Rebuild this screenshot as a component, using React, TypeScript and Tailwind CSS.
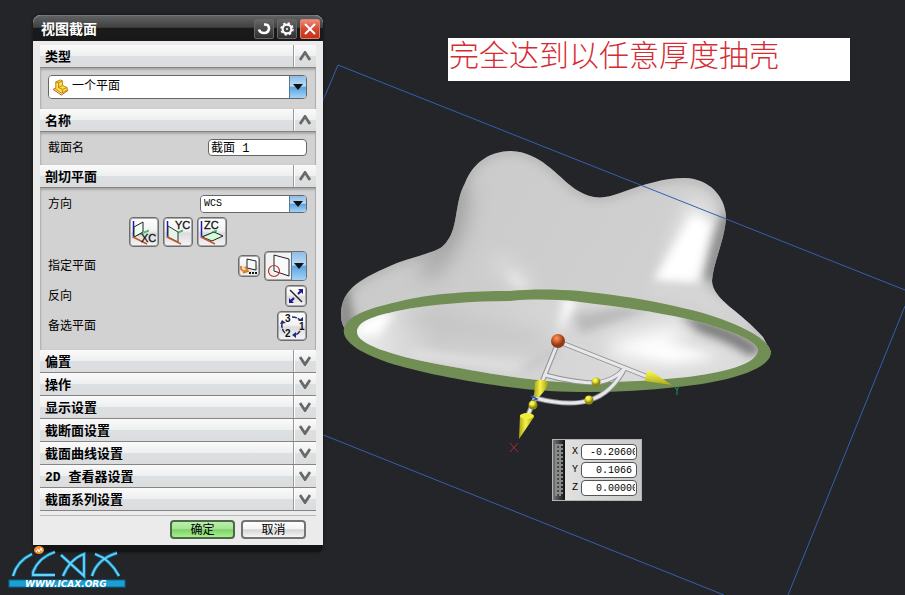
import type { ReactNode } from "react";

const collapsedSections = ["偏置", "操作", "显示设置", "截断面设置", "截面曲线设置", "2D 查看器设置", "截面系列设置"];

const coordinates = [
  { axis: "X", value: "-0.20600" },
  { axis: "Y", value: " 0.1066" },
  { axis: "Z", value: " 0.00000" },
];

const outline =
  "M341 315C341 288 362 278 397 263C420 255 436 252 443 246C460 230 453 205 465 183C474 160 493 151 511 151C540 152 556 175 575 189C592 200 604 199 620 193C645 184 664 178 685 178C710 179 724 196 726 215C726 238 713 262 712 281C713 300 740 311 763 337L771 352L740 360L560 370L380 345L347 332Q341 325 341 315Z";

const rimOuter =
  "M344 329C347 316 366 309 397 302C430 293 475 291 510 291C530 289 555 289 580 291C640 297 680 307 703 313C742 325 771 340 771 353C769 373 712 384 677 387C635 392 590 393 550 391C500 388 435 376 400 366C367 357 341 343 344 329Z";

const rimInner =
  "M357 332C357 321 375 316 397 311C430 304 475 301 510 301C530 299 555 299 580 302C622 307 655 312 683 318C720 327 757 339 758 350C757 367 710 375 677 378C640 382 595 383 560 382C510 378 470 370 437 364C390 355 357 344 357 332Z";

function PanelHeader({ title, open }: { title: string; open?: boolean }) {
  return (
    <button
      type="button"
      aria-expanded={!!open}
      className="flex h-[23px] w-full items-stretch border-b border-[#858585] bg-[linear-gradient(#fafafa,#eeefef_48%,#dce0e3_52%,#dcdcdc)] text-left text-[13px] font-bold text-black"
    >
      <span className="flex flex-1 items-center pt-[2px] pl-[5px] leading-none">{title}</span>
      <span className="flex w-[23px] items-center justify-center border-l border-[#999] shadow-[inset_1px_0_0_#fff]">
        <svg viewBox="0 0 12 10" className="h-[10px] w-3" fill="none" stroke="#686868" strokeWidth="2.8">
          <path d={open ? "M1 9L6 1.5L11 9" : "M1 1L6 8.5L11 1"} />
        </svg>
      </span>
    </button>
  );
}

function PanelBody({ children }: { children: ReactNode }) {
  return (
    <div className="flex flex-col gap-1 bg-[#d2d2d2] pt-[7px] pr-[9px] pb-[9px] pl-2 text-xs shadow-[inset_1px_2px_2px_#aaa,inset_-1px_0_1px_#aaa]">
      {children}
    </div>
  );
}

function Row({ children }: { children: ReactNode }) {
  return <div className="flex items-center justify-between">{children}</div>;
}

function ToolButton({ label, className, children }: { label: string; className: string; children: ReactNode }) {
  return (
    <button
      type="button"
      aria-label={label}
      className={`flex items-center justify-center rounded-[4px] border border-[#6d6d6d] bg-[linear-gradient(#fff,#f2f2f2_45%,#dcdce0_55%,#f5f5f5)] shadow-[inset_0_0_0_1px_#aaa] ${className}`}
    >
      {children}
    </button>
  );
}

function DropArrow({ className }: { className: string }) {
  return (
    <span
      className={`pointer-events-none flex items-center justify-center border-l border-[#59788f] bg-[linear-gradient(#8fbbe6,#b8ddf8_45%,#5fa5df_52%,#a3d3f8)] ${className}`}
    >
      <svg viewBox="0 0 10 6" className="h-[6px] w-[10px]">
        <path d="M0 0H10L5 6Z" fill="#111" />
      </svg>
    </span>
  );
}

function AxisIcon({ name }: { name: "XC" | "YC" | "ZC" }) {
  return (
    <svg viewBox="0 0 26 26" className="size-[26px]" fill="none" strokeWidth="1">
      <path d="M2.500 2V19" stroke="#1919b8" strokeWidth="1.500" />
      <path d="M2 18L18 12" stroke="#2fb65f" />
      {name === "XC" && <path d="M3 8L12 3V13L3 18Z" fill="#effff2" stroke="#222" />}
      {name === "YC" && <path d="M3 7L13 13V23L3 18Z" fill="#e7f5e9" stroke="#333" />}
      {name === "ZC" && <path d="M3 18L15 13L24 17L13 22Z" fill="#cffbd8" stroke="#222" />}
      <path d="M2 18L16 25" stroke="#c55432" strokeWidth="1.500" />
      <path d="M13 13L18 11" stroke="#2fb65f" />
      <text
        x={name === "XC" ? 10 : name === "YC" ? 10 : 5}
        y={name === "XC" ? 23 : 10}
        fill="#111"
        className="font-['Liberation_Sans',sans-serif] text-[11px]"
        stroke="#111"
        strokeWidth="0.3"
      >
        {name}
      </text>
    </svg>
  );
}

function Dialog() {
  return (
    <section className="absolute top-[15px] left-[33px] w-[290px] rounded-t-lg rounded-b-md border-b-[7px] border-[#131416] bg-[#ebebeb] shadow-[0_0_3px_#111]">
      <header className="flex h-[26px] items-center gap-[2px] rounded-t-lg border-t border-[#777] bg-[linear-gradient(#606162,#414142_45%,#1a1a1a_50%,#181818)] pr-[3px] pl-2 text-white">
        <h1 className="flex-1 pt-[2px] text-sm leading-none font-bold">视图截面</h1>
        <button type="button" aria-label="重置" className="flex size-5 items-center justify-center rounded-[2px] border border-[#666] bg-[linear-gradient(#656565,#303030)]">
          <svg viewBox="0 0 16 16" className="size-4" fill="none" stroke="#fff" strokeWidth="2.6">
            <path d="M8 3.5Q13 3 13 7.500Q12.500 12 8 12Q4 12 3 8.500" />
          </svg>
        </button>
        <button type="button" aria-label="设置" className="ml-[1px] flex size-5 items-center justify-center rounded-[2px] border border-[#666] bg-[linear-gradient(#656565,#303030)]">
          <svg viewBox="0 0 16 16" className="size-4" fill="none" stroke="#fff">
            <circle cx="8" cy="8" r="4.400" strokeWidth="2.200" />
            <circle cx="8" cy="8" r="6" strokeWidth="1.400" strokeDasharray="2.300 2.410" />
            <circle cx="8" cy="8" r="1" fill="#fff" stroke="none" />
          </svg>
        </button>
        <button type="button" aria-label="关闭" className="ml-[1px] flex size-5 items-center justify-center rounded-[2px] border border-[#d98270] bg-[linear-gradient(#ef8c77,#d64832_50%,#c83019)]">
          <svg viewBox="0 0 16 16" className="size-4" stroke="#fff" strokeWidth="2">
            <path d="M3 3L13 13M13 3L3 13" />
          </svg>
        </button>
      </header>

      <div className="px-[7px] pt-1 pb-[6px]">
        <PanelHeader title="类型" open />
        <PanelBody>
          <div className="mb-[1px] grid h-6 overflow-hidden rounded-[4px] border border-[#666] bg-white">
            <select aria-label="类型" className="col-start-1 row-start-1 h-[22px] w-full appearance-none bg-white pl-[23px] text-xs leading-[20px] text-black">
              <option>一个平面</option>
            </select>
            <svg viewBox="0 0 18 18" className="pointer-events-none col-start-1 row-start-1 ml-[3px] size-[17px] self-center" stroke="#b98210">
              <path d="M1 11L9 8L17 12L10 17Z" fill="#fff0a0" stroke="#c65222" />
              <path d="M4 3L9 1L11 2V7L16 9V12L10 15L4 11Z" fill="#ffe04a" />
              <path d="M4 3L7 4V9L11 11V15M7 4L11 2M7 9L11 7M11 11L16 9" fill="none" />
            </svg>
            <DropArrow className="col-start-1 row-start-1 w-[17px] justify-self-end" />
          </div>
        </PanelBody>

        <PanelHeader title="名称" open />
        <PanelBody>
          <Row>
            <label htmlFor="section-name" className="pt-[2px] leading-none">截面名</label>
            <input id="section-name" defaultValue="截面 1" className="h-[17px] w-[99px] rounded-[4px] border border-[#666] bg-white px-[2px] pb-[2px] text-xs leading-none" />
          </Row>
        </PanelBody>

        <PanelHeader title="剖切平面" open />
        <PanelBody>
          <Row>
            <label htmlFor="direction" className="pt-[2px] leading-none">方向</label>
            <div className="grid h-[18px] w-[107px] overflow-hidden rounded-[4px] border border-[#666] bg-white">
              <select id="direction" className="col-start-1 row-start-1 w-full appearance-none bg-white pl-[3px] text-[10px] leading-none text-black">
                <option>WCS</option>
              </select>
              <DropArrow className="col-start-1 row-start-1 w-[17px] justify-self-end" />
            </div>
          </Row>
          <div className="flex justify-end gap-1 pr-20">
            <ToolButton label="XC 平面" className="size-[30px]"><AxisIcon name="XC" /></ToolButton>
            <ToolButton label="YC 平面" className="size-[30px]"><AxisIcon name="YC" /></ToolButton>
            <ToolButton label="ZC 平面" className="size-[30px]"><AxisIcon name="ZC" /></ToolButton>
          </div>
          <Row>
            <span className="pt-[2px] leading-none">指定平面</span>
            <div className="flex items-center gap-1">
              <ToolButton label="平面对话框" className="size-[22px]">
                <svg viewBox="0 0 20 20" className="size-5" fill="none">
                  <path d="M8 3L17 5V14L8 12Z" fill="#f8f8f8" stroke="#222" />
                  <path d="M2 10V13Q4 16 8 15M6 11L9 15L4 17" stroke="#e37c16" strokeWidth="1.800" />
                  <path d="M10 17H18" stroke="#111" strokeWidth="2" strokeDasharray="2 1" />
                </svg>
              </ToolButton>
              <div className="flex h-[30px] w-[43px] overflow-hidden rounded-[4px] border border-[#6d6d6d] bg-[#f3f3f3] shadow-[inset_0_0_0_1px_#aaa]">
                <button type="button" aria-label="指定平面" className="flex-1">
                  <svg viewBox="0 0 26 28" className="h-7 w-[26px]" fill="none">
                    <path d="M9 3L24 7V24L9 19Z" fill="#fafafa" stroke="#222" />
                    <circle cx="9" cy="19" r="5.500" stroke="#bd3030" strokeWidth="1.200" />
                  </svg>
                </button>
                <button type="button" aria-label="平面类型" className="flex">
                  <DropArrow className="h-full w-[15px]" />
                </button>
              </div>
            </div>
          </Row>
          <Row>
            <span className="pt-[2px] leading-none">反向</span>
            <ToolButton label="反向" className="size-[22px]">
              <svg viewBox="0 0 20 20" className="size-5">
                <path d="M4 4L16 16" stroke="#222" strokeWidth="1.400" />
                <path d="M5 15L8 12M12 8L15 5" stroke="#1b1b8e" strokeWidth="2.200" />
                <path d="M12 3H17V8ZM3 12V17H8Z" fill="#1b1b8e" />
              </svg>
            </ToolButton>
          </Row>
          <Row>
            <span className="pt-[2px] leading-none">备选平面</span>
            <ToolButton label="备选平面" className="size-[30px]">
              <svg viewBox="0 0 28 28" className="size-7" fill="none" stroke="#252b70" strokeWidth="1.500">
                <path d="M14 5Q19 5 22 8M22 19Q20 22 17 23M7 21Q3 17 4 11" strokeDasharray="5 1" />
                <path d="M20 9H25V5ZM18 20L14 23L18 26ZM2 12L4 8L8 11Z" fill="#252b70" stroke="none" />
                <g fill="#111" stroke="none" className="font-['Liberation_Sans',sans-serif] text-[10px] font-bold">
                  <text x="7" y="10">3</text>
                  <text x="21" y="18">1</text>
                  <text x="7" y="25">2</text>
                </g>
              </svg>
            </ToolButton>
          </Row>
        </PanelBody>

        {collapsedSections.map((title) => (
          <PanelHeader key={title} title={title} />
        ))}

        <footer className="mt-1 flex justify-end gap-[6px] border-t border-[#b8b8b8] pt-1 pr-[10px] text-xs">
          <button type="button" className="h-[19px] w-[65px] rounded-[4px] border-2 border-[#4d6849] bg-[linear-gradient(#b9efaa,#a6e397_45%,#7fd069_52%,#a6f28e)] pt-[2px] leading-none">确定</button>
          <button type="button" className="h-[19px] w-[65px] rounded-[4px] border-2 border-[#737373] bg-[linear-gradient(#fff,#f4f4f4_45%,#d5d5d5_52%,#f5f5f5)] pt-[2px] leading-none">取消</button>
        </footer>
      </div>
    </section>
  );
}

function Viewport() {
  return (
    <svg viewBox="0 0 905 595" preserveAspectRatio="xMinYMin slice" className="absolute inset-0 size-full">
      <defs>
        <clipPath id="body"><path d={outline} /></clipPath>
        <clipPath id="cavity"><path d={rimInner} /></clipPath>
        <filter id="soft4" filterUnits="userSpaceOnUse" x="300" y="120" width="500" height="300"><feGaussianBlur stdDeviation="5" /></filter>
        <filter id="soft9" filterUnits="userSpaceOnUse" x="300" y="120" width="500" height="300"><feGaussianBlur stdDeviation="10" /></filter>
        <linearGradient id="shell" x1="0" x2="1" y1="0" y2="0.3">
          <stop offset="0" stopColor="#c8c8c8" />
          <stop offset="0.5" stopColor="#cdcdcd" />
          <stop offset="1" stopColor="#d2d2d2" />
        </linearGradient>
        <linearGradient id="inside" x1="0" x2="1">
          <stop offset="0" stopColor="#ececec" />
          <stop offset="0.2" stopColor="#cccccc" />
          <stop offset="0.5" stopColor="#d6d6d6" />
          <stop offset="1" stopColor="#dcdcdc" />
        </linearGradient>
        <radialGradient id="ball" cx="0.4" cy="0.3">
          <stop offset="0" stopColor="#f59a66" />
          <stop offset="0.5" stopColor="#d9622f" />
          <stop offset="1" stopColor="#8c3a17" />
        </radialGradient>
        <radialGradient id="knob" cx="0.4" cy="0.3">
          <stop offset="0" stopColor="#ffff8a" />
          <stop offset="0.5" stopColor="#e5e02c" />
          <stop offset="1" stopColor="#8b8710" />
        </radialGradient>
        <linearGradient id="cone">
          <stop offset="0" stopColor="#a9a414" />
          <stop offset="0.45" stopColor="#f6f34c" />
          <stop offset="1" stopColor="#a19c10" />
        </linearGradient>
        <linearGradient id="coneRight" x1="0" x2="0" y1="0" y2="1">
          <stop offset="0" stopColor="#ffff55" />
          <stop offset="1" stopColor="#b0aa15" />
        </linearGradient>
      </defs>

      <path d={outline} fill="url(#shell)" />
      <g clipPath="url(#body)">
        <path d={outline} fill="none" stroke="#8f8f8f" strokeWidth="4" opacity="0.700" filter="url(#soft4)" />
        <path d="M460 185Q464 220 445 250L425 275" fill="none" stroke="#8f8f8f" strokeWidth="16" opacity="0.700" filter="url(#soft9)" />
        <path d="M338 285V335L358 330L348 290Z" fill="#777" opacity="0.700" filter="url(#soft4)" />
        <path d="M495 260L530 288" stroke="#e2e2e2" strokeWidth="12" filter="url(#soft9)" />
        <path d="M510 275L525 287" stroke="#e8e8e8" strokeWidth="8" filter="url(#soft4)" />
        <path d="M692 215L712 222L697 282L653 281Q674 248 692 215Z" fill="#fff" filter="url(#soft4)" />
        <path d="M690 200L708 206L700 275L662 278Z" fill="#fff" opacity="0.700" filter="url(#soft9)" />
        <path d="M729 215Q718 240 710 280" fill="none" stroke="#777" strokeWidth="11" opacity="0.800" filter="url(#soft4)" />
        <path d="M650 291Q705 290 752 325" fill="none" stroke="#d6d6d6" strokeWidth="12" filter="url(#soft4)" />
      </g>

      <path d={rimOuter} fill="#718e55" />
      <path d={rimInner} fill="url(#inside)" />
      <g clipPath="url(#cavity)">
        <path d="M355 335Q362 312 395 312L378 336Z" fill="#fff" filter="url(#soft4)" />
        <path d="M405 316L545 342" stroke="#bcbcbc" strokeWidth="12" opacity="0.700" filter="url(#soft9)" />
        <path d="M558 336L564 298H578Z" fill="#fff" filter="url(#soft4)" />
        <path d="M580 334L650 310L625 306L575 315Z" fill="#bababa" filter="url(#soft4)" />
        <path d="M610 342L690 322L670 348L730 358L665 364L610 355Z" fill="#fff" filter="url(#soft9)" />
        <path d="M625 345L690 350L715 357L670 360Z" fill="#fff" filter="url(#soft4)" />
        <path d="M680 315Q730 322 764 350L750 356Q730 342 700 332Z" fill="#6e6e6e" opacity="0.900" filter="url(#soft4)" />
        <path d="M410 354L530 368" fill="none" stroke="#dedede" strokeWidth="12" filter="url(#soft4)" />
        <path d="M556 350L520 372" stroke="#bcbcbc" strokeWidth="6" opacity="0.700" filter="url(#soft4)" />
      </g>

      <path d="M316 117L338 65L905 290M905 306L788 595M316 432L724 595" fill="none" stroke="#355fae" strokeWidth="1" />

      <g fill="none" strokeLinecap="round">
        <g stroke="#929297" strokeWidth="5">
          <path d="M557 345L544 377L528 415M562 343L653 379" />
          <path d="M545 375Q575 383 597 383Q615 380 625 368M535 398Q570 407 590 400Q612 393 625 368" />
        </g>
        <g stroke="#e8e8eb" strokeWidth="3">
          <path d="M557 345L544 377L528 415M562 343L653 379" />
          <path d="M545 375Q575 383 597 383Q615 380 625 368M535 398Q570 407 590 400Q612 393 625 368" />
        </g>
      </g>
      <path d="M535 382Q541 377 548 382Q548 388 539 397L534 397Z" fill="url(#cone)" />
      <path d="M520 415Q527 411 534 417L519 439Z" fill="url(#cone)" />
      <ellipse cx="527" cy="416" rx="7" ry="3" fill="#f0ed39" />
      <path d="M649 370L672 385L645 381Q645 374 649 370Z" fill="url(#coneRight)" />
      <path d="M531 396L537 399L532 401" fill="none" stroke="#2c50b5" strokeWidth="1.500" />
      <circle cx="558" cy="341" r="7" fill="url(#ball)" />
      <circle cx="596" cy="382" r="4.500" fill="url(#knob)" />
      <circle cx="589" cy="400" r="4.500" fill="url(#knob)" />
      <circle cx="533" cy="405" r="4.500" fill="url(#knob)" />
      <path d="M510 443L518 452M518 443L510 452" stroke="#a32f35" />
      <path d="M674 386L677 390L679 386M677 390V395" fill="none" stroke="#16994d" />
    </svg>
  );
}

function CoordinatePanel() {
  return (
    <div className="absolute top-[439px] left-[552px] flex w-[90px] border border-[#b5b5b5] bg-[linear-gradient(90deg,#e5e5e5,#c9c9c9)]">
      <div className="w-3 bg-[linear-gradient(90deg,#777,#111)] px-[2px] py-1">
        <div className="h-full bg-[linear-gradient(90deg,#8a8a8a_2px,transparent_2px),linear-gradient(#8a8a8a_2px,transparent_2px)] bg-[size:4px_4px]" />
      </div>
      <div className="flex flex-1 flex-col gap-[2px] py-1 pr-1 pl-[7px]">
        {coordinates.map(({ axis, value }) => (
          <label key={axis} className="flex items-center gap-[3px] text-[10px] leading-none">
            <span className="w-[6px]">{axis}</span>
            <input defaultValue={value} className="h-4 w-0 flex-1 rounded-[4px] border border-[#555] bg-white pr-[1px] pl-2" />
          </label>
        ))}
      </div>
    </div>
  );
}

function SiteLogo() {
  return (
    <svg viewBox="0 0 120 44" className="absolute top-[545px] left-[7px] h-11 w-[120px]" role="img" aria-label="WWW.ICAX.ORG">
      <rect x="2" y="35" width="116" height="7" fill="#1aa0d3" stroke="#0b6792" />
      <g fill="none" stroke="#157dae" strokeWidth="3.400">
        <path d="M6 31Q10 16 25 9M48 7Q32 12 26 27V30H48M54 10L77 31V9Q63 14 56 31M85 31Q90 14 110 8M88 9Q103 14 112 31" />
      </g>
      <g fill="none" stroke="#67d4fa" strokeWidth="1.800">
        <path d="M6 31Q10 16 25 9M48 7Q32 12 26 27V30H48M54 10L77 31V9Q63 14 56 31M85 31Q90 14 110 8M88 9Q103 14 112 31" />
      </g>
      <ellipse cx="32" cy="5" rx="5" ry="4" fill="#f19132" />
      <path d="M29 7L31 4L32 7L34 3L35 6" fill="none" stroke="#fff" />
      <text x="18" y="42" fill="#fff" className="font-['DejaVu_Sans',sans-serif] text-[9px] font-bold italic">
        WWW.ICAX.ORG
      </text>
    </svg>
  );
}

export default function App() {
  return (
    <main className="relative min-h-screen overflow-hidden bg-[#242529] font-['Liberation_Mono','Noto_Sans_CJK_SC',monospace] text-black">
      <Viewport />
      <p className="absolute top-[38px] left-[448px] h-[43px] w-[402px] bg-white pl-[1px] font-['Noto_Sans_CJK_SC',sans-serif] text-[30px] leading-[30px] font-light text-[#d52c34]">
        完全达到以任意厚度抽壳
      </p>
      <Dialog />
      <CoordinatePanel />
      <SiteLogo />
    </main>
  );
}
